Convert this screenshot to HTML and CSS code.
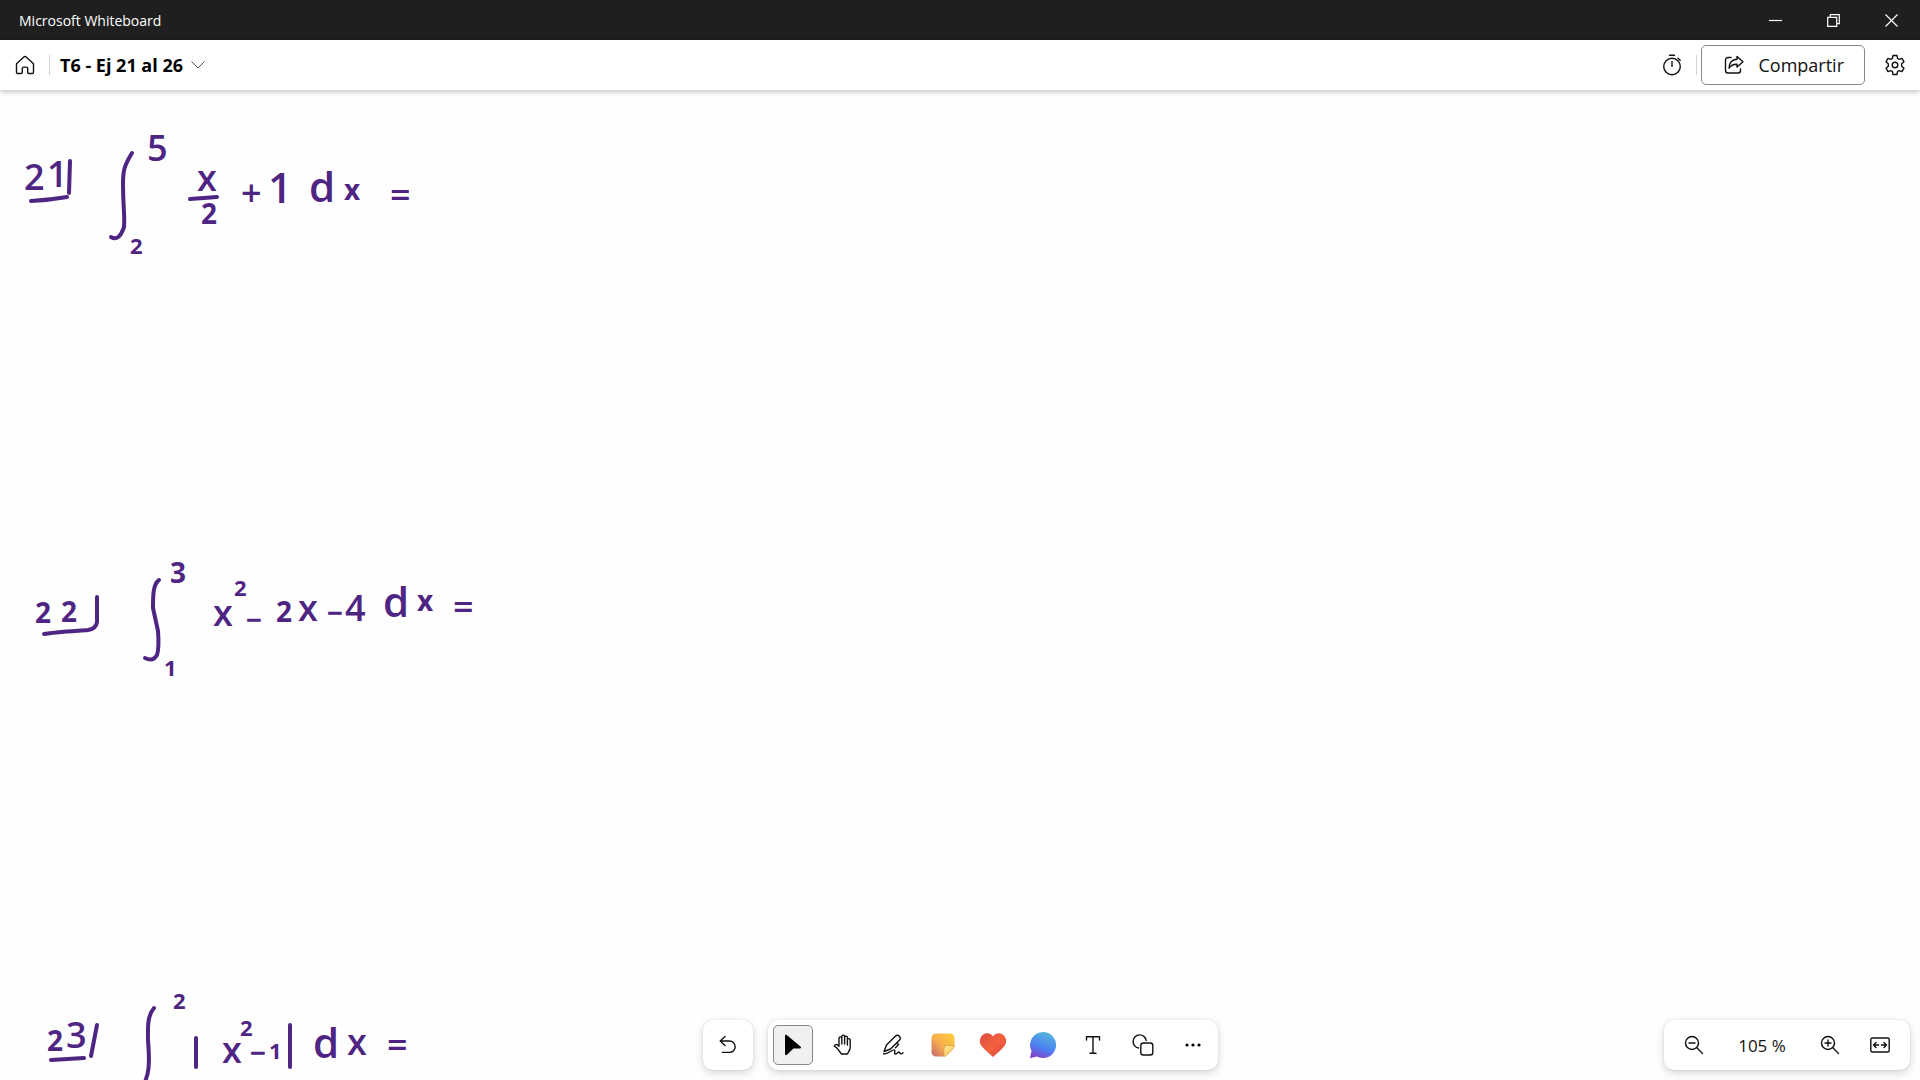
FILE: index.html
```
<!DOCTYPE html>
<html lang="es">
<head>
	<meta charset="utf-8">
	<title>Microsoft Whiteboard</title>

	<link rel="stylesheet" href="styles.css">
</head>
<body>

	<div class="titlebar">
		<span class="app-name">Microsoft Whiteboard</span>
		<div class="window-controls">
			<button type="button" aria-label="Minimizar">
				<svg width="13" height="13" viewBox="0 0 13 13"><path d="M0 6.500h13"/></svg>
			</button>
			<button type="button" aria-label="Restaurar">
				<svg width="13" height="13" viewBox="0 0 13 13"><path d="M.7 3.300h9v9h-9zM3.300 3V.7h9v9H10"/></svg>
			</button>
			<button type="button" aria-label="Cerrar">
				<svg width="13" height="13" viewBox="0 0 13 13"><path d="M.5.5l12 12M12.500.5l-12 12"/></svg>
			</button>
		</div>
	</div>

	<header class="header">
		<button class="icon-button" type="button" aria-label="Inicio">
			<svg class="icon" width="20" height="20" viewBox="0 0 20 20"><path d="M1.500 8.800 8.800 2a1.800 1.800 0 0 1 2.400 0l7.300 6.800v8.500a1.200 1.200 0 0 1-1.200 1.200h-3.600a1 1 0 0 1-1-1v-4a1.400 1.400 0 0 0-1.400-1.400H8.700a1.400 1.400 0 0 0-1.400 1.400v4a1 1 0 0 1-1 1H2.700a1.200 1.200 0 0 1-1.200-1.200z"/></svg>
		</button>
		<span class="divider"></span>
		<button class="board-name" type="button">
			<span>T6 - Ej 21 al 26</span>
			<svg class="chevron" width="14" height="8" viewBox="0 0 14 8"><path d="M.5.5 7 7l6.500-6.500"/></svg>
		</button>

		<div class="header-actions">
			<button class="icon-button" type="button" aria-label="Temporizador">
				<svg class="icon" width="20" height="22" viewBox="0 0 20 22"><circle cx="10" cy="12.500" r="8.300"/><path d="M7.500 1.200h5M10 7.500v5M16 4.200l2.200 2"/></svg>
			</button>
			<span class="divider"></span>
			<button class="share" type="button">
				<svg class="icon" width="20" height="20" viewBox="0 0 20 20"><path d="M7 2.500H4A2.500 2.500 0 0 0 1.500 5v10.500A2.500 2.500 0 0 0 4 18h10a2.500 2.500 0 0 0 2.500-2.500V14"/><path d="M13 1.500l6 5.300-6 5.200V9.200c-3.500-.2-6 1-8 4 .2-5 3-8.500 8-8.900z"/></svg>
				<span>Compartir</span>
			</button>
			<button class="icon-button settings" type="button" aria-label="Configuración">
				<svg class="icon" width="22" height="22" viewBox="0 0 22 22"><path d="M9 1.500h4l.6 3 1.500.9 2.900-1 2 3.400-2.300 2v2.400l2.300 2-2 3.400-2.900-1-1.500.9-.6 3H9l-.6-3-1.500-.9-2.900 1-2-3.400 2.300-2V9.800L2 7.800l2-3.400 2.900 1 1.500-.9z"/><circle cx="11" cy="11" r="2.800"/></svg>
			</button>
		</div>
	</header>

	<main class="board">
		<svg class="ink" aria-label="Pizarra">
			<!-- 21 -->
			<g transform="translate(0 30)">
				<text class="lg" x="24 47" y="70 67">21</text>
				<path d="M70 41 69 73M31 81Q50 80 67 77"/>
				<path d="M132 33C124 46 123 51 123 64C123 88 125 95 124 107Q119 122 111 117"/>
				<text class="lg" x="147" y="41">5</text>
				<text class="sm" x="130" y="134">2</text>
				<text class="lg" x="197" y="71">x</text>
				<path d="M190 79 217 77"/>
				<text class="md" x="201" y="104">2</text>
				<text class="lg" x="241" y="86">+</text>
				<text class="xl" x="268" y="83">1</text>
				<text class="xl" x="309" y="82">d</text>
				<text class="md" x="344" y="80">x</text>
				<text class="lg" x="390" y="88">=</text>
			</g>

			<!-- 22 -->
			<g transform="translate(0 460)">
				<text class="md" x="35 61" y="73 72">22</text>
				<path d="M97 47V72Q96 79 88 80C75 81 55 82 44 84"/>
				<path d="M159 30C153 34 153 46 153 58L158 81C159 94 159 99 157 105Q153 112 145 108"/>
				<text class="md" x="170" y="33">3</text>
				<text class="sm" x="164" y="126">1</text>
				<text class="lg" x="213" y="76">x</text>
				<text class="sm" x="234" y="46">2</text>
				<text class="md" x="246" y="80">−</text>
				<text class="md" x="276" y="72">2</text>
				<text class="lg" x="298" y="71">x</text>
				<text class="md" x="327" y="73">−</text>
				<text class="lg" x="345" y="71">4</text>
				<text class="xl" x="383" y="67">d</text>
				<text class="md" x="417" y="61">x</text>
				<text class="lg" x="453" y="70">=</text>
			</g>

			<!-- 23 -->
			<g transform="translate(0 890)">
				<text class="md" x="47" y="71">2</text>
				<text class="lg" x="66" y="68">3</text>
				<path d="M97 45 91 76M51 80 84 78"/>
				<path d="M154 28C147 36 148 48 148 60C150 85 149 95 143 106"/>
				<text class="sm" x="173" y="29">2</text>
				<path d="M196 58V87M290 45V87"/>
				<text class="lg" x="222" y="83">x</text>
				<text class="sm" x="240" y="56">2</text>
				<text class="md" x="250" y="83">−</text>
				<text class="sm" x="269" y="79">1</text>
				<text class="xl" x="313" y="78">d</text>
				<text class="lg" x="347" y="75">x</text>
				<text class="lg" x="387" y="78">=</text>
			</g>
		</svg>

		<div class="tools">
			<div class="panel">
				<button class="icon-button" type="button" aria-label="Deshacer">
					<svg class="icon" width="18" height="20" viewBox="0 0 18 20"><path d="M6 1.500 1.200 6 6 10.500M1.500 6h9a5.700 5.700 0 0 1 0 11.400H3.500"/></svg>
				</button>
			</div>

			<div class="panel" role="toolbar" aria-label="Herramientas">
				<button class="icon-button selected" type="button" aria-label="Seleccionar">
					<svg width="18" height="22" viewBox="0 0 18 22"><path d="M1 2.200C1 .9 2.200.4 3 1.200l13.500 11.400c1 .9.500 1.900-.7 1.900h-6.400L3 20.800c-.9.900-2 .5-2-.7z"/></svg>
				</button>
				<button class="icon-button" type="button" aria-label="Desplazar">
					<svg class="icon" width="20" height="22" viewBox="0 0 20 22"><path d="M6 12V4.300a1.400 1.400 0 0 1 2.800 0V10M8.800 4V2.500a1.400 1.400 0 0 1 2.800 0V10M11.600 3.500a1.400 1.400 0 0 1 2.800 0V11M14.400 6a1.400 1.400 0 0 1 2.800 0v7c0 2-.5 3.200-1.500 4.500L14.500 20h-6L3.800 13.800 1.200 12c.6-1.600 2.300-1.900 3.500-1L6 12.200"/></svg>
				</button>
				<button class="icon-button" type="button" aria-label="Entrada de lápiz">
					<svg class="icon" width="22" height="22" viewBox="0 0 22 22"><path d="M4.500 11 13.300 2.200a2.800 2.800 0 0 1 4 4L8.500 15 2 17.500zM14.800 8.800l1.700 1.700-3 3.200M1.500 19.800c5 .7 8.500-4.300 10.500-3.900 2.200.4-.6 4 1.300 4.100 1.600 0 2.700-2.300 3.900-1.900.9.300.3 1.800 1.600 1.800.8 0 1.500-.5 2.200-1.200"/></svg>
				</button>
				<button class="icon-button" type="button" aria-label="Notas">
					<svg width="24" height="24" viewBox="0 0 24 24">
						<defs>
							<linearGradient id="note" x1="1" y1="0" x2="0" y2="1"><stop offset="0" stop-color="#ffce38"/><stop offset=".55" stop-color="#f6ae4f"/><stop offset="1" stop-color="#c66472"/></linearGradient>
							<linearGradient id="fold" x1="0" y1="0" x2="1" y2="1"><stop offset="0" stop-color="#fff3ad"/><stop offset="1" stop-color="#f7b82d"/></linearGradient>
						</defs>
						<path fill="url(#note)" d="M5 .5h14A4.500 4.500 0 0 1 23.500 5v7.500l-10.500 11H5A4.500 4.500 0 0 1 .5 19V5A4.500 4.500 0 0 1 5 .5z"/>
						<path fill="url(#fold)" stroke="#dc9331" stroke-width=".7" d="M13 23.300V16a3.500 3.500 0 0 1 3.500-3.500h6.900c0 1.300-.5 2.200-1.400 3.100l-5.800 6.200c-.9 1-1.900 1.500-3.200 1.500z"/>
					</svg>
				</button>
				<button class="icon-button" type="button" aria-label="Reacciones">
					<svg width="28" height="26" viewBox="0 0 28 26">
						<defs><linearGradient id="heart" x1="0" y1="0" x2="1" y2="1"><stop offset="0" stop-color="#d84c42"/><stop offset=".5" stop-color="#f4603d"/><stop offset="1" stop-color="#dc493f"/></linearGradient></defs>
						<path fill="url(#heart)" d="M14 4.500C11.500.7 7 .3 4 2.700 0 5.800 0 11 3 14.500c3 3.800 7 6.500 11 10.500 4-4 8-6.700 11-10.500C28 11 28 5.800 24 2.700 21 .3 16.500.7 14 4.500z"/>
					</svg>
				</button>
				<button class="icon-button" type="button" aria-label="Comentarios">
					<svg width="26" height="26" viewBox="0 0 26 26">
						<defs><linearGradient id="bubble" x1=".7" y1="0" x2=".3" y2="1"><stop offset="0" stop-color="#55b7dc"/><stop offset=".6" stop-color="#4b80f1"/><stop offset="1" stop-color="#8442ca"/></linearGradient></defs>
						<path fill="url(#bubble)" d="M13 0a13 13 0 1 1-6.200 24.400L.8 26q-.9 0-.6-1l1.300-6A13 13 0 0 1 13 0z"/>
					</svg>
				</button>
				<button class="icon-button" type="button" aria-label="Texto">
					<svg class="icon" width="16" height="20" viewBox="0 0 16 20"><path d="M1.500 5V1.800h13V5M8 1.800v16.400M5 18.200h6"/></svg>
				</button>
				<button class="icon-button" type="button" aria-label="Formas">
					<svg class="icon" width="22" height="22" viewBox="0 0 22 22"><path d="M6.500 14A6.600 6.600 0 1 1 14.200 6.500"/><rect x="8.800" y="9" width="12" height="12" rx="2.500"/></svg>
				</button>
				<button class="icon-button" type="button" aria-label="Más opciones">
					<svg width="16" height="4" viewBox="0 0 16 4"><circle cx="2" cy="2" r="1.600"/><circle cx="8" cy="2" r="1.600"/><circle cx="14" cy="2" r="1.600"/></svg>
				</button>
			</div>
		</div>

		<div class="panel zoom">
			<button class="icon-button" type="button" aria-label="Alejar">
				<svg class="icon" width="20" height="20" viewBox="0 0 20 20"><circle cx="8" cy="8" r="6.500"/><path d="M12.800 12.800 18.500 18.500M5 8h6"/></svg>
			</button>
			<span class="zoom-level">105 %</span>
			<button class="icon-button" type="button" aria-label="Acercar">
				<svg class="icon" width="20" height="20" viewBox="0 0 20 20"><circle cx="8" cy="8" r="6.500"/><path d="M12.800 12.800 18.500 18.500M5 8h6M8 5v6"/></svg>
			</button>
			<button class="icon-button" type="button" aria-label="Ajustar a la pantalla">
				<svg class="icon" width="20" height="16" viewBox="0 0 20 16"><rect x=".8" y="1" width="18.400" height="14" rx="1.500"/><path d="M8.500 8h-5M6 5.500 3.500 8 6 10.500M11.500 8h5M14 5.500 16.500 8 14 10.500"/></svg>
			</button>
		</div>
	</main>

</body>
</html>
```
FILE: styles.css
```
* {
	box-sizing: border-box;
}
body {
	color: #111;
	display: flex;
	flex-direction: column;
	font-family: "Open Sans", "Noto Sans", sans-serif;
	height: 100vh;
	margin: 0;
	overflow: hidden;
}
button {
	align-items: center;
	background: none;
	border: 0;
	color: inherit;
	display: flex;
	font: inherit;
	justify-content: center;
	padding: 0;
}
svg {
	display: block;
	flex-shrink: 0;
}

/* window title bar */
.titlebar {
	align-items: center;
	background: #1f1f1f;
	color: #fff;
	display: flex;
	flex-shrink: 0;
	height: 40px;
	justify-content: space-between;
	padding-left: 19px;
}
.app-name {
	font-size: 14px;
}
.window-controls {
	display: flex;
	height: 100%;
}
.window-controls button {
	width: 58px;
}
.window-controls svg {
	fill: none;
	stroke: #fff;
	stroke-width: 1.2;
}

/* board header */
.header {
	align-items: center;
	background: #fff;
	box-shadow: 0 1px 6px rgba(0, 0, 0, .3);
	display: flex;
	flex-shrink: 0;
	height: 50px;
	padding: 0 5px;
	z-index: 1;
}
.icon-button {
	border: 1px solid transparent;
	border-radius: 5px;
	height: 40px;
	width: 40px;
}
.icon {
	fill: none;
	stroke: #111;
	stroke-linecap: round;
	stroke-linejoin: round;
	stroke-width: 1.4;
}
.divider {
	background: #d4d4d4;
	height: 20px;
	margin: 0 4px;
	width: 1px;
}
.board-name {
	color: #000;
	font-size: 18px;
	font-weight: 700;
	gap: 8px;
	margin-left: 6px;
}
.chevron {
	fill: none;
	stroke: #555;
}
.header-actions {
	align-items: center;
	display: flex;
	margin-left: auto;
}
.share {
	border: 1px solid #888;
	border-radius: 5px;
	font-size: 18px;
	gap: 14px;
	height: 40px;
	padding: 0 20px 0 22px;
}
.settings {
	margin-left: 10px;
}

/* canvas */
.board {
	background: #fefefe;
	flex: 1;
	min-height: 0;
	position: relative;
}
.ink {
	height: 100%;
	width: 100%;
}
.ink path {
	fill: none;
	stroke: #4f2584;
	stroke-linecap: round;
	stroke-linejoin: round;
	stroke-width: 4;
}
.ink text {
	fill: #4f2584;
	font-weight: 600;
}
.ink .sm,
.ink .md {
	font-weight: 700;
}
.sm { font-size: 22px; }
.md { font-size: 28px; }
.lg { font-size: 36px; }
.xl { font-size: 42px; }

/* floating panels */
.tools {
	bottom: 10px;
	display: flex;
	gap: 15px;
	justify-content: center;
	left: 0;
	pointer-events: none;
	position: absolute;
	right: 0;
}
.panel {
	background: #fff;
	border-radius: 10px;
	box-shadow: 0 3px 8px rgba(0, 0, 0, .16), 0 0 2px rgba(0, 0, 0, .12);
	display: flex;
	gap: 10px;
	padding: 5px;
	pointer-events: auto;
}
.selected {
	background: #f0f0f0;
	border-color: #888;
}
.zoom {
	align-items: center;
	bottom: 10px;
	gap: 10px;
	padding: 5px 10px;
	position: absolute;
	right: 10px;
}
.zoom-level {
	font-size: 17px;
	text-align: center;
	width: 76px;
}
```
